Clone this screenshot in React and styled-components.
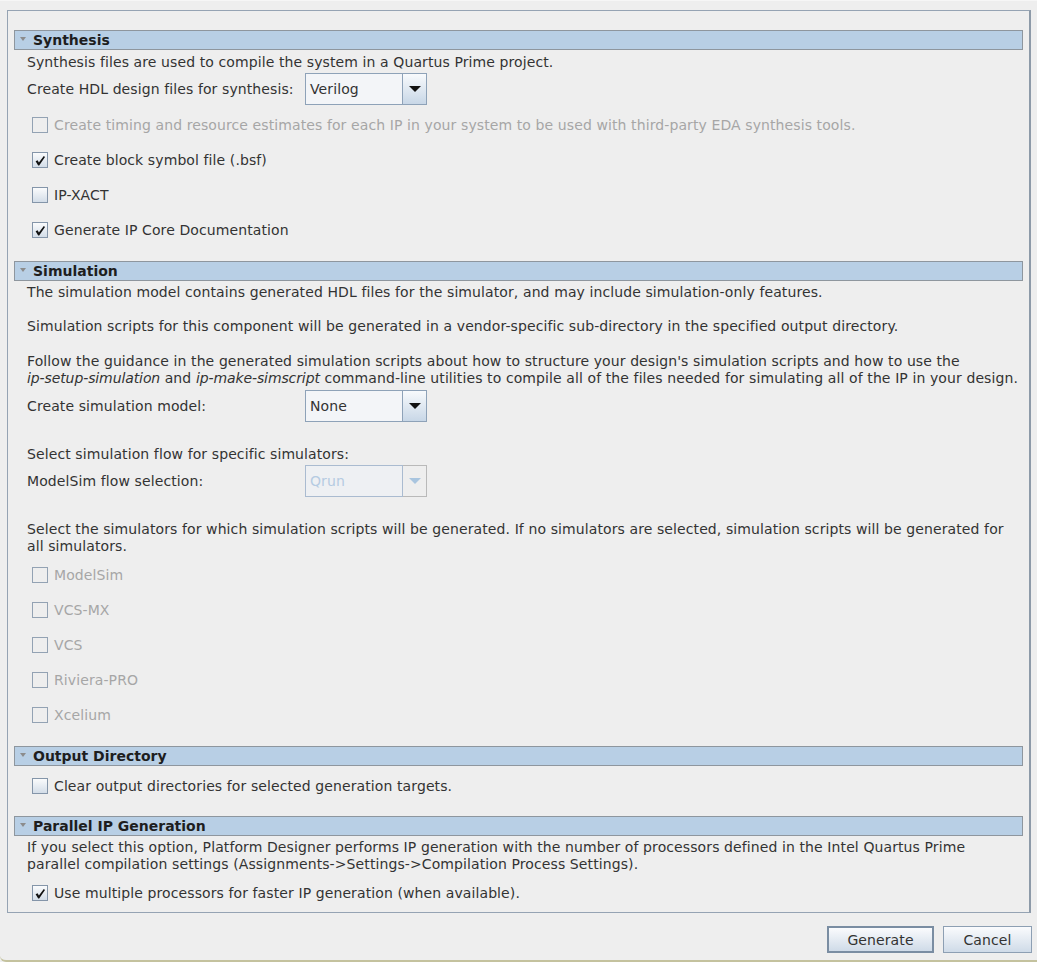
import React from 'react';
import styled, { createGlobalStyle } from 'styled-components';

const GlobalStyle = createGlobalStyle`
    body {
        margin: 0;
        background: #eeeeee;
        font-family: "DejaVu Sans", "Liberation Sans", sans-serif;
        font-size: 14px;
        letter-spacing: 0.1px;
        color: #333333;
    }
`;

const Window = styled.div`
    width: 1037px;
    height: 962px;
    box-sizing: border-box;
    display: flex;
    flex-direction: column;
    padding: 9px 6px 0 7px;
    background: #eeeeee;
    border-top: 1px solid #f6f6f6;
    border-bottom: 2px solid #c4c29e;
    border-bottom-left-radius: 6px;
`;

const Panel = styled.div`
    border: 1px solid #95a3b3;
    border-right: 2px solid #8d9aa8;
    padding: 19px 6px 2px 6px;
`;

const Section = styled.div`
    margin-top: ${(p) => p.$top || 0}px;
`;

const Header = styled.div`
    height: 20px;
    box-sizing: border-box;
    display: flex;
    align-items: center;
    gap: 7px;
    padding-left: 5px;
    background: #b8cfe5;
    border: 1px solid #8e969e;
    font-weight: bold;
    letter-spacing: 0;
    color: #1e1e1e;
`;

const Triangle = styled.span`
    width: 0;
    height: 0;
    border-left: 3.5px solid transparent;
    border-right: 3.5px solid transparent;
    border-top: 4px solid #8c8c8c;
    margin-top: -3px;
`;

const Body = styled.div`
    padding-left: 13px;
`;

const Text = styled.div`
    line-height: 17px;
    margin-top: ${(p) => p.$top || 0}px;
    white-space: nowrap;
`;

const Em = styled.i`
    letter-spacing: -0.1px;
`;

const FieldRow = styled.div`
    display: flex;
    align-items: center;
    height: 32px;
    margin-top: ${(p) => p.$top || 0}px;
`;

const Label = styled.span`
    width: 278px;
    white-space: nowrap;
`;

const Combo = styled.div`
    display: flex;
    width: 122px;
    height: 32px;
`;

const ComboField = styled.div`
    flex: 1;
    display: flex;
    align-items: center;
    padding-left: 4px;
    border: 1px solid ${(p) => (p.$disabled ? '#aabbd0' : '#8ea2b8')};
    background: ${(p) => (p.$disabled ? '#eef0f3' : '#f3f5f8')};
    color: ${(p) => (p.$disabled ? '#b5cbe2' : '#333333')};
`;

const ComboButton = styled.div`
    width: 23px;
    display: flex;
    align-items: center;
    justify-content: center;
    border: 1px solid ${(p) => (p.$disabled ? '#b9b9b9' : '#8ea2b8')};
    border-left: none;
    background: ${(p) => (p.$disabled ? '#eeeeee' : 'linear-gradient(#f8fafc, #c8d7e7)')};
`;

const Arrow = styled.span`
    width: 0;
    height: 0;
    border-left: 6px solid transparent;
    border-right: 6px solid transparent;
    border-top: 6px solid ${(p) => (p.$disabled ? '#a9c5df' : '#111111')};
`;

const Checks = styled.div`
    margin-top: 2px;
`;

const CheckRow = styled.label`
    display: flex;
    align-items: center;
    height: 35px;
    padding-left: 5px;
    gap: 6px;
    color: ${(p) => (p.$disabled ? '#a6a6a6' : '#333333')};
    white-space: nowrap;
`;

const Box = styled.span`
    width: 16px;
    height: 16px;
    box-sizing: border-box;
    flex: none;
    display: flex;
    align-items: center;
    justify-content: center;
    border: 1px solid ${(p) => (p.$disabled ? '#93a2b3' : '#8495a9')};
    background: ${(p) => (p.$disabled ? '#eeeeee' : 'linear-gradient(#fafbfc, #d3dde8)')};
`;

const ButtonBar = styled.div`
    display: flex;
    justify-content: flex-end;
    gap: 9px;
    margin-top: 13px;
    margin-right: -1px;
`;

const Button = styled.button`
    width: ${(p) => p.$width}px;
    height: 27px;
    box-sizing: border-box;
    font-family: inherit;
    font-size: 14px;
    letter-spacing: 0.1px;
    color: #333333;
    border: ${(p) => (p.$default ? '2px solid #7a8da2' : '1px solid #8d9fb3')};
    background: linear-gradient(#fafbfd, #cfdbe8);
    padding: 0;
`;

const Check = ({ label, checked, disabled }) => (
    <CheckRow $disabled={disabled}>
        <Box $disabled={disabled}>
            {checked && (
                <svg width="14" height="14" viewBox="0 0 14 14">
                    <path d="M2.6 8.2 L4.6 7.2 L5.9 9.6 L10.8 3 L12 4 L6.2 12.4 L5.2 12.4 Z" fill="#111" />
                </svg>
            )}
        </Box>
        {label}
    </CheckRow>
);

const Dropdown = ({ value, disabled }) => (
    <Combo>
        <ComboField $disabled={disabled}>{value}</ComboField>
        <ComboButton $disabled={disabled}>
            <Arrow $disabled={disabled} />
        </ComboButton>
    </Combo>
);

const SectionHeader = ({ title }) => (
    <Header>
        <Triangle />
        {title}
    </Header>
);

const App = () => (
    <>
        <GlobalStyle />
        <Window>
            <Panel>
                <Section>
                    <SectionHeader title="Synthesis" />
                    <Body>
                        <Text $top={4}>Synthesis files are used to compile the system in a Quartus Prime project.</Text>
                        <FieldRow $top={2}>
                            <Label>Create HDL design files for synthesis:</Label>
                            <Dropdown value="Verilog" />
                        </FieldRow>
                        <Checks>
                            <Check disabled label="Create timing and resource estimates for each IP in your system to be used with third-party EDA synthesis tools." />
                            <Check checked label="Create block symbol file (.bsf)" />
                            <Check label="IP-XACT" />
                            <Check checked label="Generate IP Core Documentation" />
                        </Checks>
                    </Body>
                </Section>

                <Section $top={14}>
                    <SectionHeader title="Simulation" />
                    <Body>
                        <Text $top={3}>The simulation model contains generated HDL files for the simulator, and may include simulation-only features.</Text>
                        <Text $top={17}>Simulation scripts for this component will be generated in a vendor-specific sub-directory in the specified output directory.</Text>
                        <Text $top={18}>
                            Follow the guidance in the generated simulation scripts about how to structure your design's simulation scripts and how to use the
                            <br />
                            <Em>ip-setup-simulation</Em> and <Em>ip-make-simscript</Em> command-line utilities to compile all of the files needed for simulating all of the IP in your design.
                        </Text>
                        <FieldRow $top={3}>
                            <Label>Create simulation model:</Label>
                            <Dropdown value="None" />
                        </FieldRow>
                        <Text $top={24}>Select simulation flow for specific simulators:</Text>
                        <FieldRow $top={2}>
                            <Label>ModelSim flow selection:</Label>
                            <Dropdown value="Qrun" disabled />
                        </FieldRow>
                        <Text $top={24}>
                            Select the simulators for which simulation scripts will be generated. If no simulators are selected, simulation scripts will be generated for
                            <br />
                            all simulators.
                        </Text>
                        <Checks>
                            <Check disabled label="ModelSim" />
                            <Check disabled label="VCS-MX" />
                            <Check disabled label="VCS" />
                            <Check disabled label="Riviera-PRO" />
                            <Check disabled label="Xcelium" />
                        </Checks>
                    </Body>
                </Section>

                <Section $top={14}>
                    <SectionHeader title="Output Directory" />
                    <Body>
                        <Checks>
                            <Check label="Clear output directories for selected generation targets." />
                        </Checks>
                    </Body>
                </Section>

                <Section $top={13}>
                    <SectionHeader title="Parallel IP Generation" />
                    <Body>
                        <Text $top={3}>
                            If you select this option, Platform Designer performs IP generation with the number of processors defined in the Intel Quartus Prime
                            <br />
                            parallel compilation settings (Assignments-&gt;Settings-&gt;Compilation Process Settings).
                        </Text>
                        <Checks>
                            <Check checked label="Use multiple processors for faster IP generation (when available)." />
                        </Checks>
                    </Body>
                </Section>
            </Panel>
            <ButtonBar>
                <Button $default $width={107}>Generate</Button>
                <Button $width={89}>Cancel</Button>
            </ButtonBar>
        </Window>
    </>
);

export default App;
